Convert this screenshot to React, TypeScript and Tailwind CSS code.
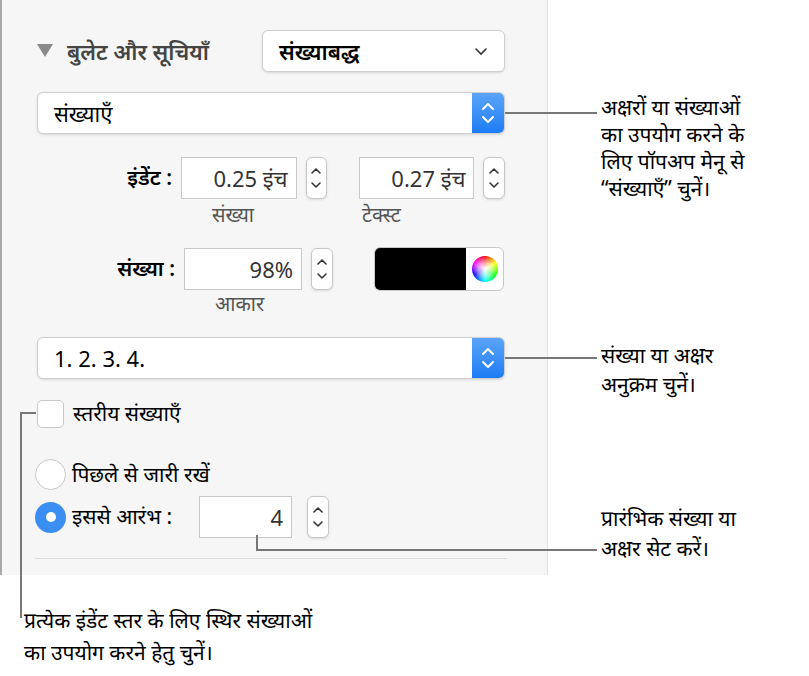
import React from "react";

const Stepper = () => (
  <div className="w-[22px] h-[42px] bg-white border border-[#c8c8c8] rounded-[6px] flex flex-col items-center justify-center shadow-sm">
    <svg width="12" height="30" viewBox="0 0 12 30" fill="none" stroke="#333" strokeWidth="1.6" strokeLinecap="round" strokeLinejoin="round">
      <path d="M2 10 L6 6 L10 10" />
      <path d="M2 20 L6 24 L10 20" />
    </svg>
  </div>
);

const Field = ({ v, w = "w-[118px]" }: { v: string; w?: string }) => (
  <div className={`${w} h-[42px] bg-white border border-[#c8c8c8] flex items-center justify-end pr-2 text-[22px] text-[#333]`}>{v}</div>
);

const Popup = ({ label }: { label: string }) => (
  <div className="h-[42px] bg-white rounded-[6px] border border-[#cfcfcf] shadow-sm flex items-center overflow-hidden">
    <div className="flex-1 pl-4 text-[22px] text-black">{label}</div>
    <div className="w-[32px] h-full bg-gradient-to-b from-[#5aa4f8] to-[#1a7cf5] flex items-center justify-center">
      <svg width="14" height="30" viewBox="0 0 14 30" fill="none" stroke="white" strokeWidth="2" strokeLinecap="round" strokeLinejoin="round">
        <path d="M2 11 L7 6 L12 11" />
        <path d="M2 19 L7 24 L12 19" />
      </svg>
    </div>
  </div>
);

export default function App() {
  return (
    <div className="relative w-[809px] h-[676px] bg-white overflow-hidden" style={{ fontFamily: '"Noto Sans", "Lato", sans-serif' }}>
      <div className="w-[548px] h-[575px] bg-[#f6f6f6] border-l-2 border-[#a9a9a9] border-r border-r-[#e2e2e2] pl-[35px] pr-[42px] pt-[30px]">
        <div className="flex items-center h-[42px]">
          <svg width="16" height="14" viewBox="0 0 16 14" className="mr-[14px]"><path d="M0 0 H16 L8 13 Z" fill="#8a8a8a" /></svg>
          <span className="text-[22px] font-semibold text-[#444] w-[195px]">बुलेट और सूचियाँ</span>
          <div className="flex-1 h-[42px] bg-white rounded-[6px] border border-[#d0d0d0] shadow-sm flex items-center px-4 justify-between">
            <span className="text-[22px] font-semibold text-black">संख्याबद्ध</span>
            <svg width="14" height="10" viewBox="0 0 14 10" fill="none" stroke="#333" strokeWidth="1.6" strokeLinecap="round"><path d="M2 3 L7 8 L12 3" /></svg>
          </div>
        </div>
        <div className="mt-[20px]"><Popup label="संख्याएँ" /></div>
        <div className="mt-[23px] flex items-center gap-[9px]">
          <span className="w-[138px] text-right text-[21px] font-semibold text-black">इंडेंट :</span>
          <Field v="0.25 इंच" />
          <Stepper />
          <div className="w-[14px]" />
          <Field v="0.27 इंच" />
          <Stepper />
        </div>
        <div className="flex text-[20px] text-[#555] h-[32px] items-center">
          <span className="ml-[175px]">संख्या</span>
          <span className="ml-[108px]">टेक्स्ट</span>
        </div>
        <div className="mt-[16px] flex items-center gap-[9px]">
          <span className="w-[138px] text-right text-[21px] font-semibold text-black">संख्या :</span>
          <Field v="98%" />
          <Stepper />
          <div className="ml-[32px] w-[130px] h-[44px] rounded-[6px] border border-[#c8c8c8] bg-white flex overflow-hidden">
            <div className="w-[91px] bg-black" />
            <div className="flex-1 flex items-center justify-center">
              <div className="w-[26px] h-[26px] rounded-full" style={{ background: "radial-gradient(circle, white 0%, rgba(255,255,255,0.6) 35%, rgba(255,255,255,0) 70%), conic-gradient(red, yellow, lime, cyan, blue, magenta, red)" }} />
            </div>
          </div>
        </div>
        <div className="text-[20px] text-[#555] ml-[178px] h-[26px] leading-[26px]">आकार</div>
        <div className="mt-[20px]"><Popup label="1. 2. 3. 4." /></div>
        <div className="mt-[19px] flex items-center gap-[9px]">
          <div className="w-[27px] h-[28px] bg-white border border-[#c8c8c8] rounded-[5px]" />
          <span className="text-[21px] text-black">स्तरीय संख्याएँ</span>
        </div>
        <div className="mt-[29px] flex items-center gap-[6px] -ml-[2px]">
          <div className="w-[31px] h-[31px] rounded-full bg-white border border-[#c8c8c8]" />
          <span className="text-[21px] text-black">पिछले से जारी रखें</span>
        </div>
        <div className="mt-[6px] flex items-center gap-[6px] -ml-[2px]">
          <div className="w-[31px] h-[31px] rounded-full bg-[#3b8ff2] flex items-center justify-center"><div className="w-[10px] h-[10px] rounded-full bg-white" /></div>
          <span className="text-[21px] text-black w-[121px]">इससे आरंभ :</span>
          <Field v="4" w="w-[93px]" />
          <div className="w-[3px]" />
          <Stepper />
        </div>
        <div className="mt-[20px] h-[1px] bg-[#dcdcdc] -mx-[2px]" />
      </div>

      {/* callout lines */}
      <div className="absolute left-[505px] top-[112px] w-[92px] h-[2px] bg-[#777]" />
      <div className="absolute left-[505px] top-[357px] w-[92px] h-[2px] bg-[#777]" />
      <div className="absolute left-[256px] top-[535px] w-[2px] h-[16px] bg-[#777]" />
      <div className="absolute left-[256px] top-[549px] w-[341px] h-[2px] bg-[#777]" />
      <div className="absolute left-[20px] top-[412px] w-[16px] h-[2px] bg-[#777]" />
      <div className="absolute left-[20px] top-[412px] w-[2px] h-[206px] bg-[#777]" />

      <div className="absolute left-[601px] top-[94px] text-[21px] leading-[27px] text-black">
        <div>अक्षरों या संख्याओं</div>
        <div>का उपयोग करने के</div>
        <div>लिए पॉपअप मेनू से</div>
        <div>“संख्याएँ” चुनें।</div>
      </div>
      <div className="absolute left-[601px] top-[341px] text-[21px] leading-[29px] text-black">
        <div>संख्या या अक्षर</div>
        <div>अनुक्रम चुनें।</div>
      </div>
      <div className="absolute left-[601px] top-[503px] text-[21px] leading-[30px] text-black">
        <div>प्रारंभिक संख्या या</div>
        <div>अक्षर सेट करें।</div>
      </div>
      <div className="absolute left-[24px] top-[604px] text-[21px] leading-[32px] text-black">
        <div>प्रत्येक इंडेंट स्तर के लिए स्थिर संख्याओं</div>
        <div>का उपयोग करने हेतु चुनें।</div>
      </div>
    </div>
  );
}
